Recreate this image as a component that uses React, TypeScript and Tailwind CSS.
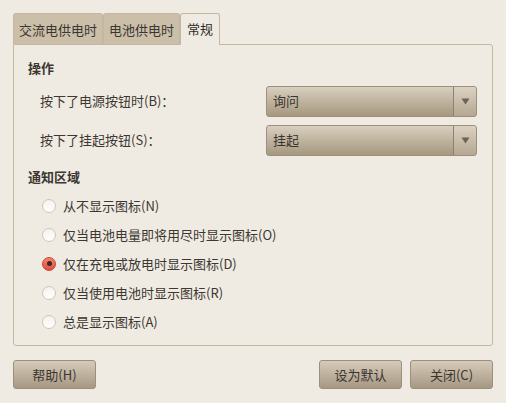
import { useState } from "react";

const font = { fontFamily: '"Noto Sans CJK SC", "Noto Sans", sans-serif' };

const options = [
  "从不显示图标(N)",
  "仅当电池电量即将用尽时显示图标(O)",
  "仅在充电或放电时显示图标(D)",
  "仅当使用电池时显示图标(R)",
  "总是显示图标(A)",
];

const Combo = ({ value }: { value: string }) => (
  <div className="flex h-[31px] w-[211px] rounded-[3px] border border-[#9c8f7c] bg-gradient-to-b from-[#d9cfbf] to-[#a6987f] text-[13px] text-[#3a3530]">
    <div className="flex flex-1 items-center border-r border-[#8e8170] pl-[6px]">{value}</div>
    <div className="flex w-[22px] items-center justify-center bg-gradient-to-b from-[#dcd2c2] to-[#b4a892] rounded-r-[3px]">
      <svg width="9" height="7" viewBox="0 0 9 7">
        <path d="M0.5 0.5h8L4.5 6.5z" fill="#6b6358" />
      </svg>
    </div>
  </div>
);

const Button = ({ label }: { label: string }) => (
  <button className="flex h-[29px] w-[83px] items-center justify-center rounded-[3px] border border-[#9c8f7c] bg-gradient-to-b from-[#d6cbba] to-[#a69883] text-[13px] text-[#3a3530]">
    {label}
  </button>
);

export default function App() {
  const [selected, setSelected] = useState(2);

  return (
    <div className="h-[403px] w-[506px] bg-[#efebe3] text-[13px] text-[#3c3731]" style={font}>
      <div className="px-[13px] pt-[13px]">
        <div className="flex items-end">
          <div className="flex h-[31px] items-center rounded-t-[3px] border border-b-0 border-[#c5b8a2] bg-[#cbbfaa] px-[5px] pt-[2px] text-[#3a3530]">
            交流电供电时
          </div>
          <div className="flex h-[31px] items-center rounded-t-[3px] border border-b-0 border-[#c5b8a2] bg-[#cbbfaa] px-[5px] pt-[2px] text-[#3a3530]">
            电池供电时
          </div>
          <div className="relative -mb-px flex h-[32px] items-center rounded-t-[3px] border border-b-0 border-[#c5b8a2] bg-[#efebe3] px-[6px] pb-[2px] text-[#2e2a25]">
            常规
          </div>
        </div>
        <div className="h-[302px] rounded-b-[3px] rounded-tr-[3px] border border-[#c5b8a2] px-[14px] pt-[13px]">
          <div className="font-bold">操作</div>
          <div className="mt-[8px] flex flex-col gap-[8px] pl-[12px]">
            <div className="flex items-center justify-between pr-[1px]">
              <span>按下了电源按钮时(B)：</span>
              <Combo value="询问" />
            </div>
            <div className="flex items-center justify-between pr-[1px]">
              <span>按下了挂起按钮(S)：</span>
              <Combo value="挂起" />
            </div>
          </div>
          <div className="mt-[11px] font-bold">通知区域</div>
          <div className="mt-[5px] flex flex-col pl-[14px]">
            {options.map((o, i) => (
              <label key={o} className="flex h-[29px] items-center gap-[7px]" onClick={() => setSelected(i)}>
                {selected === i ? (
                  <span className="flex h-[14px] w-[14px] items-center justify-center rounded-full border border-[#c0463a] bg-gradient-to-b from-[#f5826d] to-[#e0503c]">
                    <span className="h-[5px] w-[5px] rounded-full bg-[#3a2a24]" />
                  </span>
                ) : (
                  <span className="h-[14px] w-[14px] rounded-full border border-[#cfc6b8] bg-gradient-to-b from-[#f4f2ee] to-[#ffffff]" />
                )}
                <span>{o}</span>
              </label>
            ))}
          </div>
        </div>
        <div className="mt-[14px] flex items-center">
          <Button label="帮助(H)" />
          <div className="flex-1" />
          <div className="flex gap-[8px]">
            <Button label="设为默认" />
            <Button label="关闭(C)" />
          </div>
        </div>
      </div>
    </div>
  );
}
